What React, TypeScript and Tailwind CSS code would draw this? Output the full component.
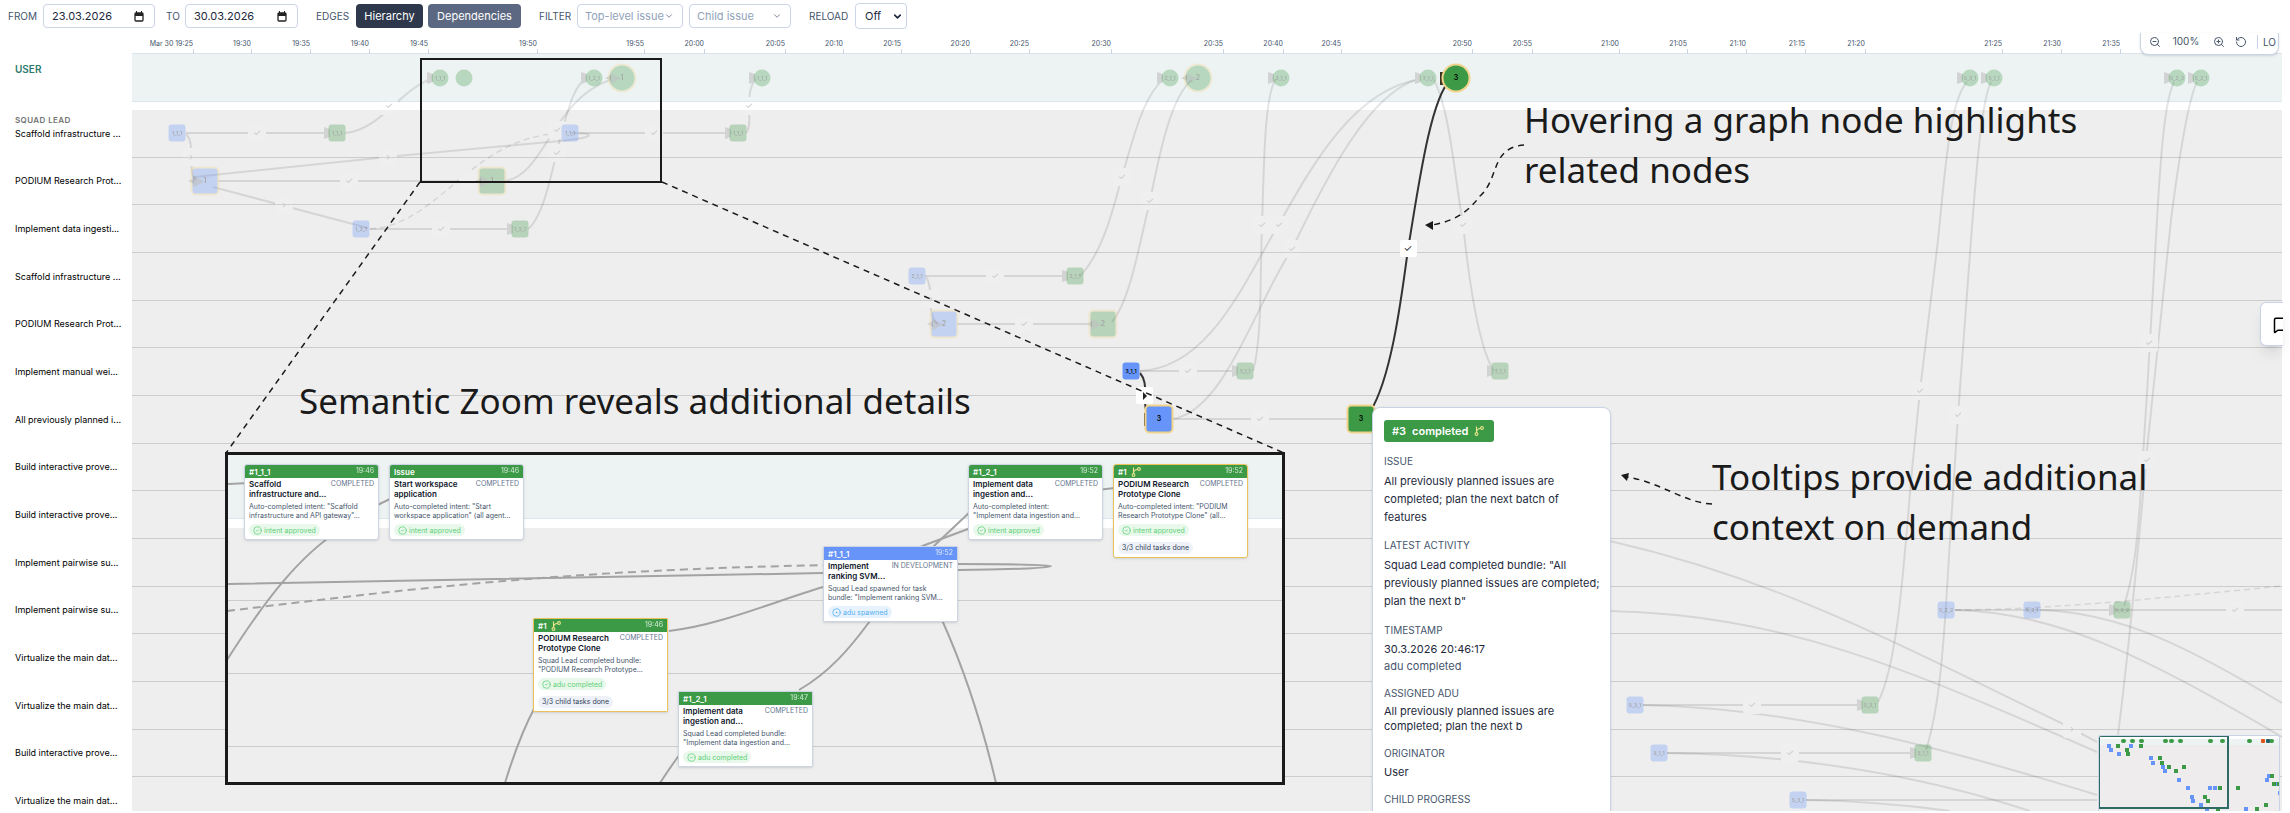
import React from "react";
import {
  ChevronDown,
  CircleCheck,
  CircleDot,
  MessageSquare,
  RotateCcw,
  ZoomIn,
  ZoomOut,
} from "lucide-react";
import clsx from "clsx";

type GraphNode = {
  x: number;
  y: number;
  label?: string;
  kind: "green" | "blue";
  shape?: "circle";
  big?: boolean;
  active?: boolean;
  arrow?: boolean;
};

type CardData = {
  x: number;
  y: number;
  id: string;
  time: string;
  title: [string, string];
  status: string;
  body: [string, string];
  badge: string;
  tone?: "blue";
  bundle?: boolean;
  square?: boolean;
};

const LANES = [
  "Scaffold infrastructure ...",
  "PODIUM Research Prot...",
  "Implement data ingesti...",
  "Scaffold infrastructure ...",
  "PODIUM Research Prot...",
  "Implement manual wei...",
  "All previously planned i...",
  "Build interactive prove...",
  "Build interactive prove...",
  "Implement pairwise su...",
  "Implement pairwise su...",
  "Virtualize the main dat...",
  "Virtualize the main dat...",
  "Build interactive prove...",
  "Virtualize the main dat...",
];

const TICKS: [number, string][] = [
  [193, "Mar 30 19:25"],
  [251, "19:30"],
  [310, "19:35"],
  [369, "19:40"],
  [428, "19:45"],
  [537, "19:50"],
  [644, "19:55"],
  [704, "20:00"],
  [785, "20:05"],
  [843, "20:10"],
  [901, "20:15"],
  [970, "20:20"],
  [1029, "20:25"],
  [1111, "20:30"],
  [1223, "20:35"],
  [1283, "20:40"],
  [1341, "20:45"],
  [1472, "20:50"],
  [1532, "20:55"],
  [1619, "21:00"],
  [1687, "21:05"],
  [1746, "21:10"],
  [1805, "21:15"],
  [1865, "21:20"],
  [2002, "21:25"],
  [2061, "21:30"],
  [2120, "21:35"],
];

const NODES: GraphNode[] = [
  { x: 440, y: 78, kind: "green", shape: "circle", label: "1_1_1", arrow: true },
  { x: 464, y: 78, kind: "green", shape: "circle" },
  { x: 594, y: 78, kind: "green", shape: "circle", label: "1_2_1", arrow: true },
  { x: 622, y: 78, kind: "green", shape: "circle", label: "1", big: true, arrow: true },
  { x: 762, y: 78, kind: "green", shape: "circle", label: "1_1_1", arrow: true },
  { x: 1170, y: 78, kind: "green", shape: "circle", label: "2_1_1", arrow: true },
  { x: 1198, y: 78, kind: "green", shape: "circle", label: "2", big: true, arrow: true },
  { x: 1281, y: 78, kind: "green", shape: "circle", label: "3_1_1", arrow: true },
  { x: 1428, y: 78, kind: "green", shape: "circle", label: "3_1_1", arrow: true },
  { x: 1456, y: 78, kind: "green", shape: "circle", label: "3", big: true, active: true, arrow: true },
  { x: 1970, y: 78, kind: "green", shape: "circle", label: "5_3_1", arrow: true },
  { x: 1994, y: 78, kind: "green", shape: "circle", label: "5_1_1", arrow: true },
  { x: 2177, y: 78, kind: "green", shape: "circle", label: "5_2_2", arrow: true },
  { x: 2201, y: 78, kind: "green", shape: "circle", label: "5_2_1", arrow: true },
  { x: 177, y: 133, kind: "blue", label: "1_1_1" },
  { x: 337, y: 133, kind: "green", label: "1_1_1", arrow: true },
  { x: 570, y: 133, kind: "blue", label: "1_1_1" },
  { x: 738, y: 133, kind: "green", label: "1_1_1", arrow: true },
  { x: 205, y: 181, kind: "blue", label: "1", big: true, arrow: true },
  { x: 492, y: 181, kind: "green", label: "1", big: true, arrow: true },
  { x: 361, y: 229, kind: "blue", label: "1_2_1" },
  { x: 520, y: 229, kind: "green", label: "1_2_1", arrow: true },
  { x: 917, y: 276, kind: "blue", label: "2_1_1" },
  { x: 1075, y: 276, kind: "green", label: "2_1_1", arrow: true },
  { x: 944, y: 324, kind: "blue", label: "2", big: true, arrow: true },
  { x: 1103, y: 324, kind: "green", label: "2", big: true, arrow: true },
  { x: 1131, y: 371, kind: "blue", label: "3_1_1", active: true },
  { x: 1245, y: 371, kind: "green", label: "3_1_1", arrow: true },
  { x: 1500, y: 371, kind: "green", label: "3_1_1", arrow: true },
  { x: 1159, y: 419, kind: "blue", label: "3", big: true, active: true, arrow: true },
  { x: 1361, y: 419, kind: "green", label: "3", big: true, active: true },
  { x: 1946, y: 610, kind: "blue", label: "5_2_2" },
  { x: 2032, y: 610, kind: "blue", label: "5_2_1" },
  { x: 2122, y: 610, kind: "green", label: "5_2_2", arrow: true },
  { x: 1635, y: 705, kind: "blue", label: "5_3_1" },
  { x: 1870, y: 705, kind: "green", label: "5_3_1", arrow: true },
  { x: 1659, y: 753, kind: "blue", label: "5_1_1" },
  { x: 1923, y: 753, kind: "green", label: "5_1_1", arrow: true },
  { x: 1798, y: 800, kind: "blue", label: "5_3_1" },
];

const EDGES = [
  "M186 133H330",
  "M345 133C380 130 400 90 431 79",
  "M186 134C192 140 191 150 191 157C192 170 191 176 196 180",
  "M571 133C600 133 592 138 560 141L397 156L194 177",
  "M579 133H732",
  "M746 133C751 128 749 115 749 105C749 95 750 85 756 79",
  "M218 181H480",
  "M505 181C545 175 552 100 610 80",
  "M213 187L368 228",
  "M370 229H512",
  "M528 229C545 215 553 165 561 135C568 110 574 85 586 79",
  "M925 276H1067",
  "M1080 276C1105 250 1115 200 1122 177C1135 130 1145 95 1163 80",
  "M1112 322C1130 300 1138 250 1150 201C1160 150 1172 95 1192 80",
  "M957 324H1091",
  "M926 277C932 285 930 300 931 310C933 318 934 322 938 324",
  "M1139 371H1238",
  "M1140 371C1210 368 1245 280 1279 224C1315 160 1355 90 1420 79",
  "M1253 371C1262 340 1260 280 1262 224C1264 170 1264 95 1276 79",
  "M1173 419C1225 410 1255 305 1292 249C1325 180 1370 90 1420 79",
  "M1173 419H1348",
  "M1434 80C1450 110 1455 180 1463 224C1470 290 1480 350 1494 371",
  "M1878 702C1900 660 1905 540 1913 460L1920 391L1938 240C1945 170 1950 100 1967 82",
  "M1926 750C1942 700 1945 620 1950 540L1958 415L1971 240C1977 160 1982 100 1991 82",
  "M2124 606C2135 570 2137 540 2140 503C2147 400 2150 340 2157 220C2161 150 2165 100 2174 82",
  "M2118 735C2130 640 2140 530 2147 450L2171 220C2180 150 2188 100 2197 82",
  "M1955 610H2282",
  "M1955 610C2060 612 2150 660 2282 737",
  "M2040 610C2120 612 2190 648 2282 703",
  "M1610 541C1780 580 1900 645 2063 724L2097 742",
  "M1610 611C1780 615 1900 665 2097 752",
  "M1643 705H1862",
  "M1643 705C1800 708 1950 750 2097 795",
  "M1667 753H1914",
  "M1667 753C1800 755 1920 775 2030 811",
  "M1806 800H2097",
  "M1806 800C1860 801 1900 804 1950 811",
];

const DASHED_EDGES = [
  "M370 229C440 225 470 137 562 133",
  "M1955 610C2050 609 2120 602 2282 586",
];

const ACTIVE_EDGES = [
  "M1370 412C1390 380 1400 310 1408 249C1418 190 1430 100 1450 80",
  "M1140 373C1146 380 1145 388 1145 395C1145 405 1145 412 1150 419",
];

const MARKERS: [number, number, string][] = [
  [257, 133, "✓"],
  [389, 106, "✓"],
  [191, 157, "›"],
  [388, 157, "›"],
  [349, 181, "✓"],
  [284, 205, "›"],
  [441, 229, "✓"],
  [468, 181, ""],
  [557, 130, "✓"],
  [557, 153, "✓"],
  [654, 133, "✓"],
  [749, 106, "✓"],
  [1122, 177, "✓"],
  [1150, 201, "✓"],
  [1262, 225, "✓"],
  [1279, 225, "✓"],
  [1463, 225, "✓"],
  [995, 276, "✓"],
  [931, 299, "›"],
  [1024, 324, "✓"],
  [1188, 371, "✓"],
  [1260, 419, "✓"],
  [1292, 249, "✓"],
  [1920, 391, "✓"],
  [1958, 415, "✓"],
  [2149, 343, "✓"],
  [2147, 460, "✓"],
  [1752, 705, "✓"],
  [1790, 753, "✓"],
  [2235, 610, "✓"],
  [2072, 729, "›"],
];

const CARDS: CardData[] = [
  {
    x: 16,
    y: 9,
    id: "#1_1_1",
    time: "19:46",
    title: ["Scaffold", "infrastructure and..."],
    status: "COMPLETED",
    body: ['Auto-completed intent: "Scaffold', 'infrastructure and API gateway"...'],
    badge: "intent approved",
  },
  {
    x: 161,
    y: 9,
    id: "Issue",
    time: "19:46",
    title: ["Start workspace", "application"],
    status: "COMPLETED",
    body: ['Auto-completed intent: "Start', 'workspace application" (all agent...'],
    badge: "intent approved",
  },
  {
    x: 305,
    y: 163,
    id: "#1",
    time: "19:46",
    title: ["PODIUM Research", "Prototype Clone"],
    status: "COMPLETED",
    body: ["Squad Lead completed bundle:", '"PODIUM Research Prototype...'],
    badge: "adu completed",
    bundle: true,
    square: true,
  },
  {
    x: 450,
    y: 236,
    id: "#1_2_1",
    time: "19:47",
    title: ["Implement data", "ingestion and..."],
    status: "COMPLETED",
    body: ["Squad Lead completed bundle:", '"Implement data ingestion and...'],
    badge: "adu completed",
    square: true,
  },
  {
    x: 595,
    y: 91,
    id: "#1_1_1",
    time: "19:52",
    title: ["Implement", "ranking SVM..."],
    status: "IN DEVELOPMENT",
    body: ["Squad Lead spawned for task", 'bundle: "Implement ranking SVM...'],
    badge: "adu spawned",
    tone: "blue",
    square: true,
  },
  {
    x: 740,
    y: 9,
    id: "#1_2_1",
    time: "19:52",
    title: ["Implement data", "ingestion and..."],
    status: "COMPLETED",
    body: ["Auto-completed intent:", '"Implement data ingestion and...'],
    badge: "intent approved",
  },
  {
    x: 885,
    y: 9,
    id: "#1",
    time: "19:52",
    title: ["PODIUM Research", "Prototype Clone"],
    status: "COMPLETED",
    body: ['Auto-completed intent: "PODIUM', 'Research Prototype Clone" (all...'],
    badge: "intent approved",
    bundle: true,
  },
];

const DETAIL_EDGES = [
  "M227 484L250 483",
  "M227 660C265 600 300 555 340 530C355 518 372 507 392 498",
  "M227 584L823 573L958 570C1000 570 1051 568 1051 566C1051 565 1000 564 958 564H890",
  "M669 631C720 625 770 603 823 587C880 565 900 556 925 545L968 529C1020 505 1060 493 1115 488",
  "M799 690C830 672 850 648 870 621C890 590 915 565 936 544L972 510",
  "M942 620C960 660 980 715 996 783",
  "M535 707C520 735 512 760 505 783",
  "M680 754Q669 769 660 783",
];

const MINIMAP_USER = [25, 34, 43, 67, 73, 82, 112, 124, 151, 173];
const MINIMAP_BLUE: [number, number][] = [
  [10, 11], [12, 15], [20, 19], [32, 11], [52, 23], [54, 28], [64, 32], [66, 36],
  [80, 45], [89, 53], [93, 62], [94, 66], [102, 70], [108, 74], [111, 53], [116, 53],
  [147, 74], [170, 41], [168, 45], [178, 49], [181, 58],
];
const MINIMAP_GREEN: [number, number][] = [
  [19, 11], [28, 15], [29, 19], [42, 11], [61, 23], [63, 28], [70, 32], [77, 36],
  [85, 32], [106, 62], [109, 66], [119, 74], [121, 53], [139, 53], [158, 74], [167, 70],
  [173, 41], [175, 49], [180, 49],
];

const CalendarIcon = () => (
  <svg className="h-[11px] w-[10px] shrink-0" viewBox="0 0 10 11" fill="none">
    <rect x="1" y="2" width="8" height="8" rx="1" stroke="#222222" strokeWidth="1.3" />
    <path d="M1 2h8v3H1zM2 0h1v2H2zM7 0h1v2H7z" fill="#222222" />
  </svg>
);

const BundleIcon = () => (
  <svg
    className="size-[10px] shrink-0"
    viewBox="0 0 10 10"
    fill="none"
    stroke="#e8e48c"
    strokeWidth="1.1"
  >
    <circle cx="2.5" cy="8" r="1.4" />
    <circle cx="8" cy="2" r="1.4" />
    <path d="M2.5 0.5V6.6M2.5 6.6C2.5 4 4.5 2.6 6.6 2.3" />
  </svg>
);

const Toolbar = () => {
  const label = "text-[10px] text-slate-600";
  const field = "h-6 rounded border border-[#cbd5e8] bg-white text-[11px] text-slate-800";

  return (
    <header className="flex h-[33px] shrink-0 items-center px-2 pb-px">
      <label htmlFor="from" className={clsx(label, "w-[35px]")}>FROM</label>
      <div className={clsx(field, "flex w-[112px] items-center pr-[10px] pl-2")}>
        <input id="from" className="w-full min-w-0 outline-none" defaultValue="23.03.2026" />
        <CalendarIcon />
      </div>
      <label htmlFor="to" className={clsx(label, "ml-[11px] w-[19px]")}>TO</label>
      <div className={clsx(field, "flex w-[113px] items-center pr-[10px] pl-2")}>
        <input id="to" className="w-full min-w-0 outline-none" defaultValue="30.03.2026" />
        <CalendarIcon />
      </div>
      <span className={clsx(label, "ml-[18px] w-10")}>EDGES</span>
      <button className="h-6 w-[67px] rounded bg-[#2d384c] text-[11px] text-white">Hierarchy</button>
      <button className="ml-[5px] h-6 w-[93px] rounded bg-[#5c6881] text-[11px] text-white">
        Dependencies
      </button>
      <label htmlFor="top-level" className={clsx(label, "ml-[18px] w-[38px]")}>FILTER</label>
      <div className={clsx(field, "flex w-[106px] items-center pr-2 pl-[7px]")}>
        <select id="top-level" className="w-full min-w-0 appearance-none text-slate-400 outline-none">
          <option>Top-level issue</option>
        </select>
        <ChevronDown className="size-[10px] shrink-0 text-slate-500" />
      </div>
      <div className={clsx(field, "ml-[6px] flex w-[102px] items-center pr-2 pl-[7px]")}>
        <select
          aria-label="Child issue"
          className="w-full min-w-0 appearance-none text-slate-400 outline-none"
        >
          <option>Child issue</option>
        </select>
        <ChevronDown className="size-[10px] shrink-0 text-slate-500" />
      </div>
      <label htmlFor="reload" className={clsx(label, "ml-[18px] w-[46px]")}>RELOAD</label>
      <div className="flex h-[26px] w-[52px] items-center rounded border border-[#cbd5e8] bg-white pr-[3px] pl-[9px] text-[11px] text-slate-800">
        <select id="reload" className="w-full min-w-0 appearance-none outline-none">
          <option>Off</option>
        </select>
        <ChevronDown className="size-[11px] shrink-0" strokeWidth={3.5} />
      </div>
    </header>
  );
};

const Timeline = () => (
  <section className="mr-2 flex-1">
    <div className="ml-[132px] h-[21px] border-b border-[#dbe4ee]" />
    <div className="grid h-12 grid-cols-[132px_1fr]">
      <h2 className="pt-2 pl-[15px] text-[10px] leading-[14px] font-semibold text-[#2f7a6e]">
        USER
      </h2>
      <div className="border-b border-[#dce6ef] bg-[#edf3f3]" />
    </div>
    <div className="mt-2 grid h-[715px] auto-rows-fr">
      {LANES.map((lane, i) => (
        <div key={i} className="grid grid-cols-[132px_1fr]">
          <div
            className={clsx(
              "flex flex-col pl-[15px] text-[9px] whitespace-nowrap text-black",
              i === 0 ? "pt-1" : "justify-center"
            )}
          >
            {i === 0 && (
              <h2 className="text-[8px] leading-3 font-semibold tracking-wider text-neutral-500">
                SQUAD LEAD
              </h2>
            )}
            <span className="leading-4">{lane}</span>
          </div>
          <div className="border-b border-[#cccccc] bg-[#eeeeee]" />
        </div>
      ))}
    </div>
  </section>
);

const Axis = () => (
  <>
    {TICKS.map(([x, text]) => (
      <div
        key={text}
        className="absolute top-[38px] flex h-4 w-20 -translate-x-full justify-end text-[7px] leading-3 text-slate-600"
        style={{ left: x + 1 }}
      >
        <span className="whitespace-nowrap">{text}</span>
        <i className="mt-[11px] h-[5px] w-px bg-[#cbd5e1]" />
      </div>
    ))}
  </>
);

const Edges = () => (
  <svg className="pointer-events-none absolute inset-0 size-full" fill="none">
    {/* edges are interrupted where a marker sits on them */}
    <mask id="markers" maskUnits="userSpaceOnUse" x="0" y="0" width="100%" height="100%">
      <rect width="100%" height="100%" fill="#ffffff" />
      {MARKERS.map(([x, y]) => (
        <rect key={`${x}-${y}`} x={x - 9} y={y - 9} width="18" height="18" rx="3" fill="#000000" />
      ))}
    </mask>
    <g stroke="#000000" strokeOpacity=".1" strokeWidth="2" mask="url(#markers)">
      {EDGES.map((d) => (
        <path key={d} d={d} />
      ))}
      {DASHED_EDGES.map((d) => (
        <path key={d} d={d} strokeDasharray="6 4" strokeWidth="1.5" />
      ))}
    </g>
    {MARKERS.map(([x, y, text]) => (
      <g key={`${x}-${y}`}>
        <rect x={x - 9} y={y - 9} width="18" height="18" rx="3" fill="#ffffff" opacity=".1" />
        <text x={x} y={y + 3} textAnchor="middle" fontSize="9" fill="#c6c6c6">
          {text}
        </text>
      </g>
    ))}
    {NODES.filter((n) => n.arrow && !n.active).map((n) => {
      const r = n.big ? 13 : 8;
      return n.big ? (
        <path key={`${n.x}-${n.y}`} d={`M${n.x - r - 4} ${n.y}l6-3v6z`} fill="#d2d3d3" />
      ) : (
        <path
          key={`${n.x}-${n.y}`}
          d={`M${n.x - r - 5} ${n.y - 6}l6 2v8l-6 2z`}
          fill="#d2d3d3"
        />
      );
    })}
    <g stroke="#333333" strokeWidth="2">
      {ACTIVE_EDGES.map((d) => (
        <path key={d} d={d} />
      ))}
    </g>
    <path d="M1440 72h5v13h-5zM1144 413h5v13h-5z" fill="#3a3322" />
    <rect x="1400" y="240" width="17" height="17" rx="2" fill="#ffffff" />
    <text x="1408" y="252" textAnchor="middle" fontSize="10" fill="#222222">✓</text>
    <rect x="1136" y="387" width="17" height="17" rx="2" fill="#ffffff" />
    <path d="M1143 392l4 4l-4 4z" fill="#222222" />
  </svg>
);

const Nodes = () => (
  <>
    {NODES.map((n) => {
      const size = n.big ? 25 : 17;
      return (
        <button
          key={`${n.x}-${n.y}`}
          aria-label={n.label ?? "issue"}
          className={clsx(
            "absolute flex -translate-1/2 items-center justify-center overflow-hidden font-semibold text-black",
            n.shape ? "rounded-full" : "rounded-[3px]",
            n.kind === "green" ? "bg-[#3c9a47]" : "bg-[#6694f8]",
            n.big ? "text-[7px] ring-2 ring-[#f1d48c]" : "text-[5px]",
            !n.active && "opacity-30"
          )}
          style={{ left: n.x, top: n.y, width: size, height: size }}
        >
          {n.big && n.arrow && !n.active && (
            <svg className="absolute left-0 size-3" viewBox="0 0 12 12">
              <path d="M0 0L12 6L0 12z" fill="#555555" opacity=".6" />
            </svg>
          )}
          {n.label}
        </button>
      );
    })}
  </>
);

const Card = ({ card }: { card: CardData }) => (
  <article
    className={clsx(
      "absolute w-[135px] overflow-hidden border bg-white pb-[3px] text-[7px] shadow-sm",
      card.square ? "rounded-[1px]" : "rounded-[3px]",
      card.bundle ? "border-[#e9c35a]" : "border-[#cdd5e4]"
    )}
    style={{ left: card.x, top: card.y }}
  >
    <header
      className={clsx(
        "flex h-[13px] items-center gap-1 px-1 text-white",
        card.tone === "blue" ? "bg-[#6694f8]" : "bg-[#3c9a47]"
      )}
    >
      <b className="text-[8px] font-semibold">{card.id}</b>
      {card.bundle && <BundleIcon />}
      <time className="ml-auto opacity-80">{card.time}</time>
    </header>
    <div className="px-1 pt-px">
      <div className="flex justify-between leading-[10px]">
        <h3 className="w-0 text-[8px] font-semibold whitespace-nowrap text-slate-900">
          {card.title[0]}
          <br />
          {card.title[1]}
        </h3>
        <span className="whitespace-nowrap text-slate-500">{card.status}</span>
      </div>
      <p className="mt-[3px] leading-[9px] whitespace-nowrap text-slate-600">
        {card.body[0]}
        <br />
        {card.body[1]}
      </p>
      <span
        className={clsx(
          "mt-1 flex h-3 w-fit items-center gap-[2px] rounded-full px-1 leading-[9px]",
          card.tone === "blue" ? "bg-[#e6f3fe] text-[#55aef2]" : "bg-[#e8f8ea] text-[#5fd07a]"
        )}
      >
        {card.tone === "blue" ? (
          <CircleDot className="size-[9px]" />
        ) : (
          <CircleCheck className="size-[9px]" />
        )}
        {card.badge}
      </span>
      {card.bundle && (
        <span className="mt-[6px] flex h-3 w-fit items-center rounded-full bg-[#eef2f8] px-1 text-slate-700">
          3/3 child tasks done
        </span>
      )}
    </div>
  </article>
);

const DetailPanel = () => (
  <section className="absolute top-[452px] left-[225px] h-[333px] w-[1060px] overflow-hidden border-3 border-[#1a1a1a] bg-[#eeeeee]">
    <div className="h-16 border-b border-[#dce6ef] bg-[#edf3f3]" />
    <div className="h-[9px] bg-white" />
    <div className="h-[73px] border-b border-[#cccccc]" />
    <div className="h-[73px] border-b border-[#cccccc]" />
    <div className="h-[73px] border-b border-[#cccccc]" />
    <svg className="absolute inset-0 size-full" viewBox="228 455 1054 327" fill="none">
      <g stroke="#a3a3a3" strokeWidth="2">
        {DETAIL_EDGES.map((d) => (
          <path key={d} d={d} />
        ))}
        <path d="M227 611C400 590 560 570 830 565" strokeDasharray="8 5" />
      </g>
    </svg>
    {CARDS.map((card, i) => (
      <Card key={i} card={card} />
    ))}
  </section>
);

const Callouts = () => {
  const note =
    "absolute text-[35px] leading-[50px] whitespace-nowrap text-[#1a1a1a] font-['Noto_Sans',sans-serif]";

  return (
    <>
      <div className="absolute top-[58px] left-[420px] h-[125px] w-[242px] border-2 border-[#1a1a1a]" />
      <svg className="pointer-events-none absolute inset-0 size-full" fill="none">
        <g stroke="#1a1a1a" strokeWidth="1.5" strokeDasharray="6 5">
          <path d="M420 182L226 453" />
          <path d="M662 182L1284 453" />
          <path d="M1524 145C1490 148 1500 178 1480 196C1466 215 1450 222 1432 225" />
          <path d="M1712 504C1685 503 1660 482 1627 477" />
        </g>
        <path d="M1425 225l8-4v9zM1621 475l8-2l-2 8z" fill="#1a1a1a" />
      </svg>
      <p className={clsx(note, "top-[376px] left-[299px]")}>
        Semantic Zoom reveals additional details
      </p>
      <p className={clsx(note, "top-[95px] left-[1524px]")}>
        Hovering a graph node highlights
        <br />
        related nodes
      </p>
      <p className={clsx(note, "top-[452px] left-[1712px]")}>
        Tooltips provide additional
        <br />
        context on demand
      </p>
    </>
  );
};

const Tooltip = () => {
  const heading = "text-[10px] leading-4 text-slate-600";

  return (
    <aside className="absolute top-[407px] left-[1372px] w-[239px] rounded-lg border border-[#c8d4e6] bg-white px-[11px] pt-3 pb-10 text-[11px] leading-[18px] whitespace-nowrap text-slate-800 shadow-sm">
      <div className="flex h-[22px] w-[110px] items-center gap-[6px] rounded-[3px] bg-[#3c9a47] px-2 font-semibold text-white">
        <span>#3</span>
        <span>completed</span>
        <BundleIcon />
      </div>
      <h4 className={clsx(heading, "mt-[11px]")}>ISSUE</h4>
      <p className="mt-[3px]">
        All previously planned issues are
        <br />
        completed; plan the next batch of
        <br />
        features
      </p>
      <h4 className={clsx(heading, "mt-[11px]")}>LATEST ACTIVITY</h4>
      <p className="mt-[3px]">
        Squad Lead completed bundle: "All
        <br />
        previously planned issues are completed;
        <br />
        plan the next b"
      </p>
      <h4 className={clsx(heading, "mt-3")}>TIMESTAMP</h4>
      <p className="mt-[2px]">30.3.2026 20:46:17</p>
      <p className="leading-4 text-slate-600">adu completed</p>
      <h4 className={clsx(heading, "mt-[11px]")}>ASSIGNED ADU</h4>
      <p className="mt-[3px] leading-[15px]">
        All previously planned issues are
        <br />
        completed; plan the next b
      </p>
      <h4 className={clsx(heading, "mt-[11px]")}>ORIGINATOR</h4>
      <p className="mt-[2px]">User</p>
      <h4 className={clsx(heading, "mt-[10px]")}>CHILD PROGRESS</h4>
    </aside>
  );
};

const ZoomControls = () => (
  <div className="absolute top-[33px] right-[11px] flex h-[22px] w-[139px] items-center rounded-b-lg border border-t-0 border-[#c8d4e6] bg-white pb-1 pl-2 text-[10px] text-slate-600 shadow-sm">
    <button aria-label="Zoom out"><ZoomOut className="size-3" /></button>
    <span className="w-[46px] pl-1 text-center">100%</span>
    <button aria-label="Zoom in" className="ml-[6px]"><ZoomIn className="size-3" /></button>
    <button aria-label="Reset zoom" className="ml-[10px]"><RotateCcw className="size-3" /></button>
    <span className="ml-[10px] h-[14px] border-l border-[#c8d4e6] pl-[5px] leading-[14px]">LO</span>
  </div>
);

const Minimap = () => (
  <div className="absolute right-[10px] bottom-0 h-[76px] w-[182px] overflow-hidden rounded-t-[3px] border border-b-0 border-[#c8d4e6] bg-[#eeeced]">
    <svg className="size-full" fill="none">
      <rect width="182" height="3" fill="#ffffff" />
      <rect y="3" width="182" height="6" fill="#edf3f3" />
      {MINIMAP_USER.map((x) => (
        <rect key={x} x={x - 3} y="3" width="5" height="4" rx="2" fill="#3c9a47" />
      ))}
      <rect x="162" y="3" width="4" height="4" rx="1" fill="#e0541c" />
      <rect x="167" y="3" width="4" height="4" rx="1" fill="#27606b" />
      {MINIMAP_BLUE.map(([x, y]) => (
        <rect key={`${x}-${y}`} x={x - 2} y={y - 3} width="4" height="4" fill="#6694f8" />
      ))}
      {MINIMAP_GREEN.map(([x, y]) => (
        <rect key={`${x}-${y}`} x={x - 2} y={y - 3} width="4" height="4" fill="#3c9a47" />
      ))}
      <rect x="0" y="0" width="129" height="72" stroke="#2f6b66" strokeWidth="2" />
    </svg>
  </div>
);

const App = () => {
  return (
    <main className="h-screen overflow-hidden bg-white pb-[2px] font-[Inter,sans-serif]">
      <div className="relative flex h-full flex-col overflow-hidden">
        <Toolbar />
        <Timeline />
        <Axis />
        <Edges />
        <Nodes />
        <Minimap />
        <ZoomControls />
        <div className="absolute top-[302px] right-[7px] h-11 w-[23px] overflow-hidden rounded-l-md border border-r-0 border-[#c8d4e6] bg-white shadow-lg">
          <button aria-label="Open chat" className="pt-[13px] pl-3">
            <MessageSquare className="size-[18px]" />
          </button>
        </div>
        <DetailPanel />
        <Callouts />
        <Tooltip />
      </div>
    </main>
  );
};

export default App;
